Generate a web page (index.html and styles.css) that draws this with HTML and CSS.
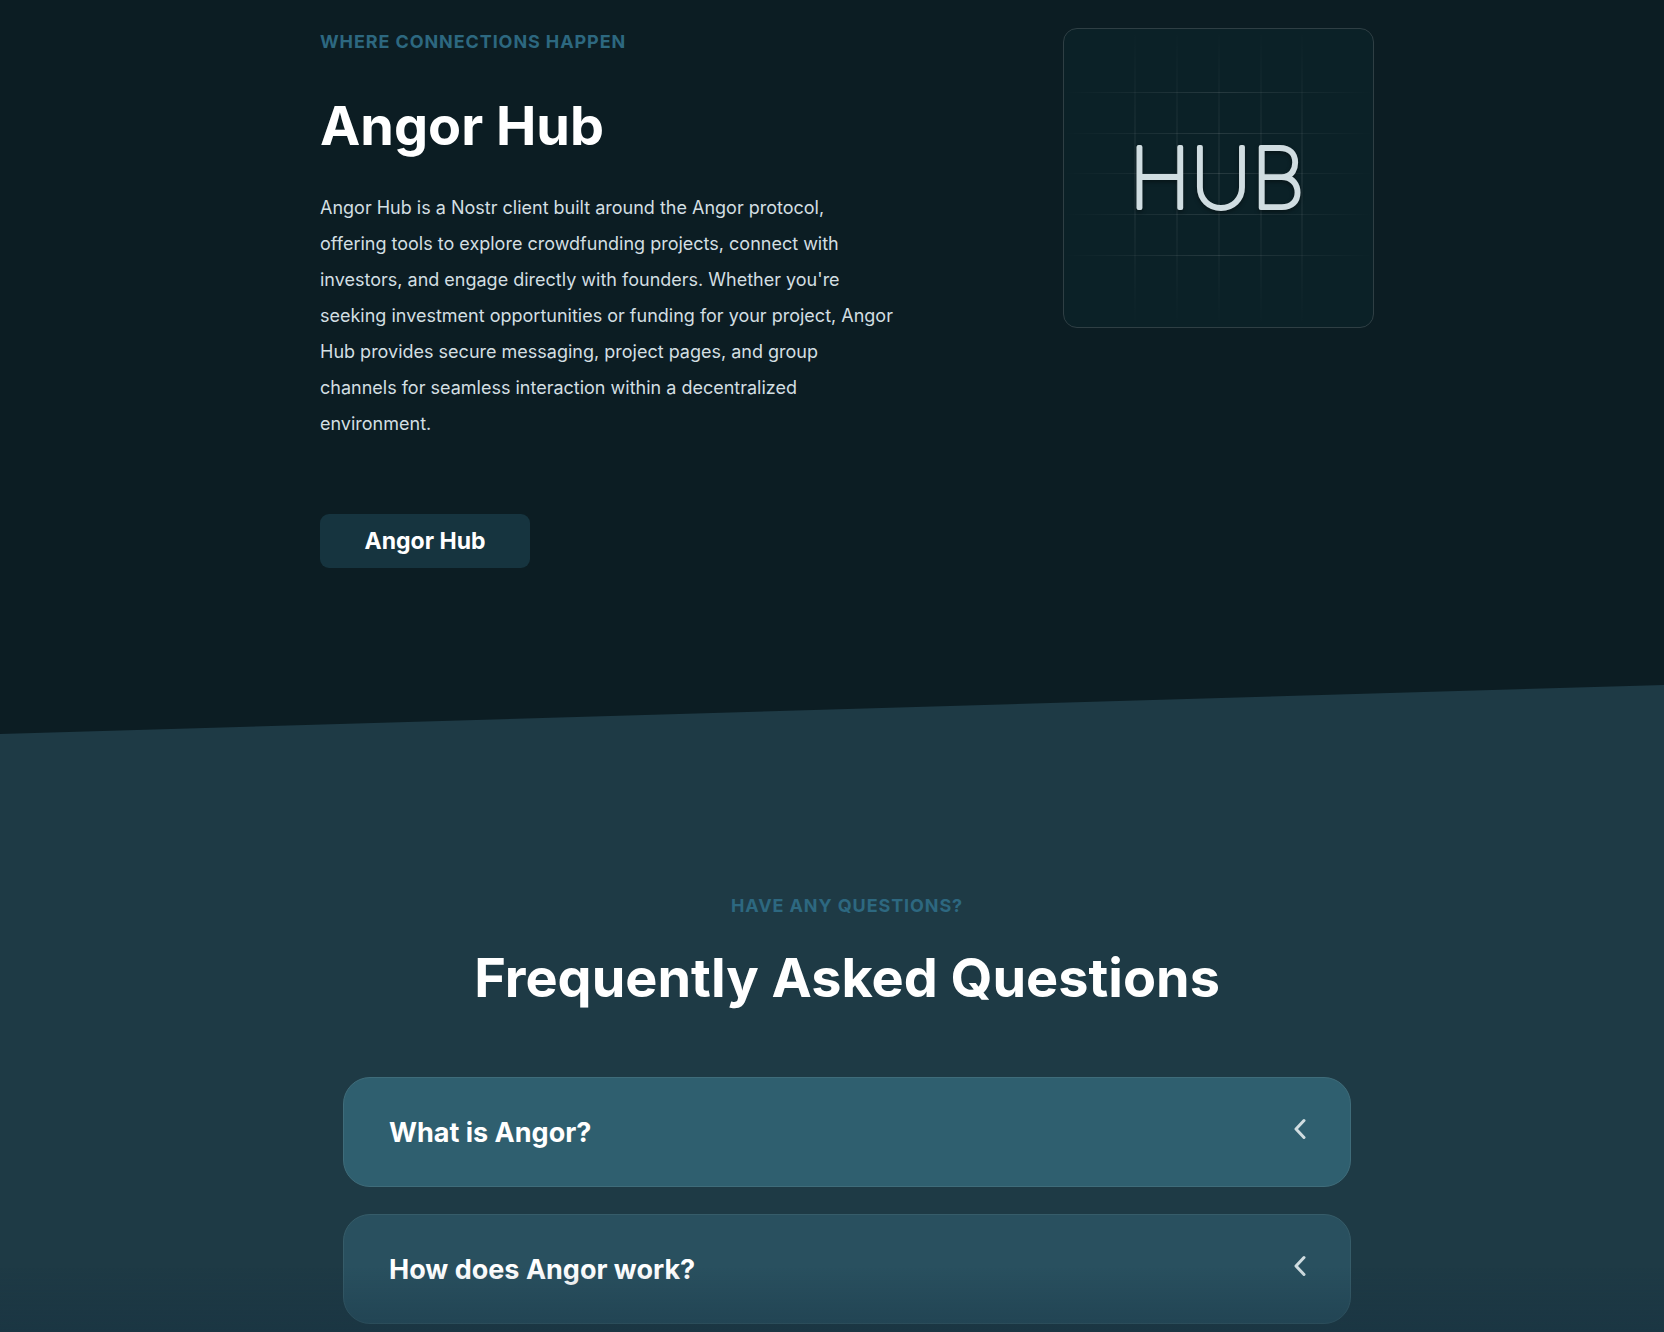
FILE: index.html
```html
<!DOCTYPE html>
<html lang="en">
<head>
<meta charset="utf-8">
<meta name="viewport" content="width=device-width, initial-scale=1">
<title>Angor Hub</title>
<link rel="stylesheet" href="styles.css">
</head>
<body>
<main>
  <section class="hub">
    <div class="hub-inner">
      <div class="hub-copy">
        <p class="eyebrow">Where connections happen</p>
        <h2 class="title hub-title">Angor Hub</h2>
        <p class="hub-text">Angor Hub is a Nostr client built around the Angor protocol, offering tools to explore crowdfunding projects, connect with investors, and engage directly with founders. Whether you're seeking investment opportunities or funding for your project, Angor Hub provides secure messaging, project pages, and group channels for seamless interaction within a decentralized environment.</p>
        <a class="hub-link" href="#hub">Angor Hub</a>
      </div>
      <div class="hub-card">
        <svg class="hub-art" viewBox="0 0 309 298" role="img" aria-label="Hub">
          <defs>
            <linearGradient id="fade-x" gradientUnits="userSpaceOnUse" x1="0" y1="0" x2="309" y2="0">
              <stop offset="0" stop-color="#fff" stop-opacity="0"/>
              <stop offset=".5" stop-color="#fff" stop-opacity=".11"/>
              <stop offset="1" stop-color="#fff" stop-opacity="0"/>
            </linearGradient>
            <linearGradient id="fade-y" gradientUnits="userSpaceOnUse" x1="0" y1="0" x2="0" y2="298">
              <stop offset="0" stop-color="#fff" stop-opacity="0"/>
              <stop offset=".5" stop-color="#fff" stop-opacity=".06"/>
              <stop offset="1" stop-color="#fff" stop-opacity="0"/>
            </linearGradient>
          </defs>
          <g fill="url(#fade-x)">
            <rect x="0" y="63" width="309" height="1"/>
            <rect x="0" y="104" width="309" height="1"/>
            <rect x="0" y="144" width="309" height="1"/>
            <rect x="0" y="185" width="309" height="1"/>
            <rect x="0" y="226" width="309" height="1"/>
          </g>
          <g fill="url(#fade-y)">
            <rect x="70" y="0" width="2" height="298"/>
            <rect x="112" y="0" width="2" height="298"/>
            <rect x="154" y="0" width="2" height="298"/>
            <rect x="196" y="0" width="2" height="298"/>
            <rect x="237" y="0" width="2" height="298"/>
          </g>
          <text class="hub-word" x="153" y="179">HUB</text>
        </svg>
      </div>
    </div>
  </section>

  <section class="faq">
    <p class="eyebrow">Have any questions?</p>
    <h2 class="title">Frequently Asked Questions</h2>
    <div class="faq-list">
      <h3 class="faq-item">
        <button class="faq-button is-active" type="button" aria-expanded="false">
          <span>What is Angor?</span>
          <svg class="chevron" viewBox="0 0 12 22" aria-hidden="true"><path d="M10 2.500 2 11l8 8.500"/></svg>
        </button>
      </h3>
      <h3 class="faq-item">
        <button class="faq-button" type="button" aria-expanded="false">
          <span>How does Angor work?</span>
          <svg class="chevron" viewBox="0 0 12 22" aria-hidden="true"><path d="M10 2.500 2 11l8 8.500"/></svg>
        </button>
      </h3>
    </div>
  </section>
</main>
<div class="page-fade"></div>
</body>
</html>
```
FILE: styles.css
```css
* {
  box-sizing: border-box;
}

body {
  margin: 0;
  background: #1e3a45;
  color: #fff;
  font-family: Inter, "Liberation Sans", sans-serif;
  font-size: 18px;
}

h2,
h3,
p {
  margin: 0;
}

.hub {
  padding: 28px 0 166px 30px;
  background: #0c1d23;
  clip-path: polygon(0 0, 100% 0, 100% calc(100% - 49px), 0 100%);
}

.hub-inner {
  display: flex;
  justify-content: space-between;
  align-items: flex-start;
  width: 66%;
  max-width: 1054px;
  margin: 0 auto;
}

.hub-copy {
  flex: 0 1 575px;
}

.eyebrow {
  color: #2d6880;
  font-weight: 700;
  line-height: 28px;
  letter-spacing: 0.05em;
  text-transform: uppercase;
}

.title {
  font-size: 54px;
  font-weight: 700;
  line-height: 68px;
}

.hub-title {
  margin: 36px 0 30px;
}

.hub-text {
  margin-bottom: 72px;
  color: #d3dfe2;
  line-height: 36px;
}

.hub-link {
  display: flex;
  justify-content: center;
  align-items: center;
  width: 210px;
  height: 54px;
  border-radius: 9px;
  background: #16343f;
  color: #fff;
  font-size: 23px;
  font-weight: 700;
  text-decoration: none;
}

.hub-card {
  flex: 0 0 311px;
  height: 300px;
  border: 1px solid #2f3f44;
  border-radius: 14px;
  background: #0b2127;
}

.hub-art {
  display: block;
  width: 100%;
  height: 100%;
}

.hub-word {
  fill: #d0dde1;
  stroke: #d0dde1;
  stroke-width: 4px;
  stroke-linejoin: round;
  font-family: Inter, sans-serif;
  font-size: 84px;
  font-weight: 100;
  text-anchor: middle;
  filter: drop-shadow(0 2px 2px rgb(0 0 0 / 40%));
}

.faq {
  padding: 158px 0 8px 30px;
  text-align: center;
}

.faq .title {
  margin: 24px 0 65px;
}

.faq-list {
  display: grid;
  gap: 27px;
  width: 62%;
  max-width: 1008px;
  margin: 0 auto;
}

.faq-item {
  font-size: 27px;
}

.faq-button {
  display: flex;
  justify-content: space-between;
  align-items: center;
  width: 100%;
  min-height: 110px;
  padding: 0 44px 0 45px;
  border: 1px solid #365c69;
  border-radius: 27px;
  background: #29505f;
  color: inherit;
  font: inherit;
  text-align: left;
}

.faq-button.is-active {
  border-color: #3f6c7a;
  background: #2f5f6f;
}

.chevron {
  width: 12px;
  height: 22px;
  margin-bottom: 6px;
  fill: none;
  stroke: #d0dde1;
  stroke-width: 3;
  stroke-linecap: round;
  stroke-linejoin: round;
}

.page-fade {
  position: fixed;
  inset: auto 0 0;
  height: 64px;
  background: linear-gradient(rgb(22 48 64 / 0%), rgb(22 48 64 / 40%));
  pointer-events: none;
}
```
